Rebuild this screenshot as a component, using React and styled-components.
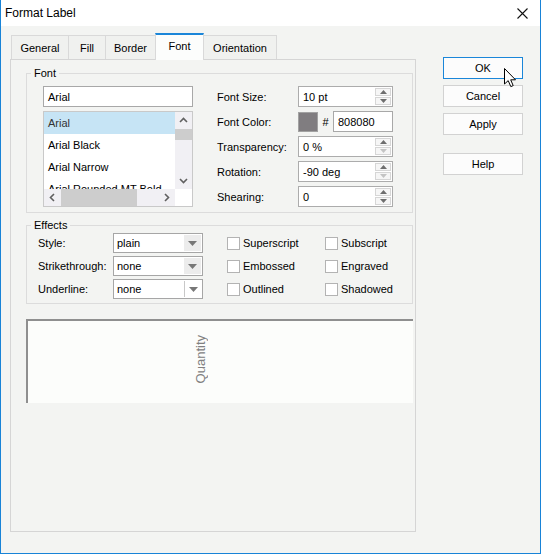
import React from 'react';
import styled, { createGlobalStyle } from 'styled-components';

const GlobalStyle = createGlobalStyle`
  html, body { margin: 0; padding: 0; background: #fff; }
  body {
    font-family: "Liberation Sans", Arial, sans-serif;
    font-size: 11px;
    color: #000;
  }
  * { box-sizing: border-box; }
`;

const Window = styled.div`
  position: relative;
  width: 541px;
  height: 554px;
  background: #f3f4f2;
  border: 1px solid #1883d7;
  border-top: none;
  display: flex;
  flex-direction: column;
`;

const TitleBar = styled.div`
  height: 26px;
  background: #fff;
  display: flex;
  align-items: center;
  justify-content: space-between;
  padding: 0 12px 0 4px;
  font-size: 12px;
`;

const Body = styled.div`
  display: flex;
  gap: 27px;
  padding: 9px 0 0 9px;
`;

const TabArea = styled.div`
  width: 406px;
  display: flex;
  flex-direction: column;
`;

const TabRow = styled.div`
  display: flex;
  align-items: flex-end;
  height: 24px;
  padding-left: 1px;
`;

const Tab = styled.div`
  position: relative;
  width: ${p => p.w}px;
  height: ${p => (p.active ? 27 : 24)}px;
  margin-right: -1px;
  margin-bottom: ${p => (p.active ? -1 : 0)}px;
  z-index: ${p => (p.active ? 2 : 1)};
  border: 1px solid #d9d9d9;
  border-bottom: none;
  border-top: ${p => (p.active ? '2px solid #1a86d9' : '1px solid #d9d9d9')};
  background: ${p => (p.active ? '#fcfdfc' : '#f0f1ef')};
  display: flex;
  align-items: center;
  justify-content: center;
  padding-bottom: ${p => (p.active ? 3 : 0)}px;
`;

const Panel = styled.div`
  height: 473px;
  border: 1px solid #d5d5d5;
  padding: 6px 2px 0 15px;
  display: flex;
  flex-direction: column;
  align-items: flex-start;
`;

const Group = styled.fieldset`
  width: 387px;
  margin: ${p => p.mt || 0}px 0 0 0;
  padding: 0;
  border: 1px solid #dcdcdc;
  min-width: 0;
`;

const Legend = styled.legend`
  padding: 0 3px;
  margin-left: 4px;
  line-height: 14px;
`;

const GroupBody = styled.div`
  padding: ${p => p.pad};
`;

const FontRow = styled.div`
  display: flex;
  gap: 24px;
`;

const LeftCol = styled.div`
  width: 150px;
  display: flex;
  flex-direction: column;
  gap: 4px;
`;

const TextBox = styled.div`
  width: ${p => p.w || 150}px;
  height: ${p => p.h || 21}px;
  border: 1px solid #a8a8a8;
  background: #fff;
  display: flex;
  align-items: center;
  padding-left: 4px;
`;

const List = styled.div`
  width: 150px;
  height: 96px;
  border: 1px solid #c9c9c9;
  background: #fff;
  display: grid;
  grid-template-columns: 1fr 17px;
  grid-template-rows: 1fr 17px;
`;

const Items = styled.div`
  overflow: hidden;
`;

const Item = styled.div`
  height: 22px;
  line-height: 22px;
  padding-left: 4px;
  white-space: nowrap;
  background: ${p => (p.selected ? '#c6e4f5' : 'transparent')};
  color: ${p => (p.selected ? '#333' : '#000')};
`;

const VScroll = styled.div`
  background: #f1f0f4;
  display: flex;
  flex-direction: column;
`;

const HScroll = styled.div`
  background: #f1f0f4;
  display: flex;
`;

const ScrollBtn = styled.div`
  width: 17px;
  height: 17px;
  flex: none;
  display: flex;
  align-items: center;
  justify-content: center;
`;

const Track = styled.div`
  flex: 1;
  display: flex;
  flex-direction: ${p => (p.vertical ? 'column' : 'row')};
`;

const Thumb = styled.div`
  background: #cdcdcd;
  width: ${p => (p.vertical ? '100%' : p.size + 'px')};
  height: ${p => (p.vertical ? p.size + 'px' : '100%')};
`;

const Corner = styled.div`
  background: #fff;
`;

const PropGrid = styled.div`
  display: grid;
  grid-template-columns: 81px 95px;
  grid-auto-rows: 21px;
  row-gap: 4px;
  align-items: center;
`;

const Spin = styled.div`
  width: 95px;
  height: 21px;
  border: 1px solid #acacac;
  background: #fff;
  display: flex;
  align-items: center;
`;

const SpinText = styled.span`
  flex: 1;
  padding-left: 4px;
`;

const SpinButtons = styled.div`
  width: 17px;
  height: 100%;
  display: flex;
  flex-direction: column;
  padding: 1px 1px 1px 0;
  gap: 1px;
`;

const SpinBtn = styled.div`
  flex: 1;
  border: 1px solid #d6d6d6;
  background: #f6f6f6;
  display: flex;
  align-items: center;
  justify-content: center;
`;

const ColorRow = styled.div`
  display: flex;
  align-items: center;
  height: 21px;
`;

const Swatch = styled.div`
  width: 20px;
  height: 20px;
  border: 1px solid #a2a2a2;
  background: #807d80;
`;

const Hash = styled.span`
  width: 15px;
  text-align: center;
`;

const EffectsGrid = styled.div`
  display: grid;
  grid-template-columns: 75px 114px 98px 1fr;
  grid-auto-rows: 20px;
  row-gap: 3px;
  align-items: center;
`;

const Combo = styled.div`
  width: 90px;
  height: 20px;
  border: 1px solid #a6a6a6;
  background: #fff;
  display: flex;
  align-items: center;
  padding: 1px;
`;

const ComboText = styled.span`
  flex: 1;
  padding-left: 2px;
`;

const ComboArrow = styled.div`
  width: 17px;
  height: 100%;
  display: flex;
  align-items: center;
  justify-content: center;
  background: ${p => (p.hot ? '#fff' : '#ececec')};
  border-left: ${p => (p.hot ? '1px solid #c8c8c8' : 'none')};
`;

const Check = styled.label`
  display: flex;
  align-items: center;
  gap: 3px;
`;

const Box = styled.span`
  width: 13px;
  height: 13px;
  border: 1px solid #b3b3b3;
  background: #fff;
`;

const Preview = styled.div`
  width: 387px;
  height: 84px;
  margin-top: 15px;
  background: #fcfdfb;
  box-shadow: inset 2px 2px 0 #8f8f8f;
  display: flex;
  align-items: center;
  padding: 2px 0 5px 167px;
`;

const Rotated = styled.span`
  writing-mode: vertical-rl;
  transform: rotate(180deg);
  font-size: 13px;
  color: #808080;
`;

const ButtonCol = styled.div`
  margin-top: 22px;
  display: flex;
  flex-direction: column;
  gap: 6px;
`;

const Button = styled.div`
  width: 80px;
  height: 22px;
  margin-top: ${p => p.mt || 0}px;
  border: 1px solid ${p => (p.primary ? '#1a86d9' : '#d2d2d2')};
  background: #fcfcfc;
  display: flex;
  align-items: center;
  justify-content: center;
`;

const Cursor = styled.svg`
  position: absolute;
  left: 503px;
  top: 68px;
`;

const Tri = ({ down, dim }) => (
  <svg width="7" height="4" viewBox="0 0 7 4">
    <polygon
      points={down ? '0,0 7,0 3.5,4' : '0,4 7,4 3.5,0'}
      fill={dim ? '#c4c4c4' : '#6e6e6e'}
    />
  </svg>
);

const rot = { up: 0, right: 90, down: 180, left: 270 };
const Chevron = ({ dir }) => (
  <svg width="9" height="9" viewBox="0 0 9 9" style={{ transform: `rotate(${rot[dir]}deg)` }}>
    <polyline points="1,6 4.5,2.5 8,6" fill="none" stroke="#606060" strokeWidth="1.6" />
  </svg>
);

const Spinner = ({ value, dimDown }) => (
  <Spin>
    <SpinText>{value}</SpinText>
    <SpinButtons>
      <SpinBtn><Tri /></SpinBtn>
      <SpinBtn><Tri down dim={dimDown} /></SpinBtn>
    </SpinButtons>
  </Spin>
);

const ComboBox = ({ value, hot }) => (
  <Combo>
    <ComboText>{value}</ComboText>
    <ComboArrow hot={hot}>
      <svg width="9" height="5" viewBox="0 0 9 5">
        <polygon points="0,0 9,0 4.5,5" fill="#777" />
      </svg>
    </ComboArrow>
  </Combo>
);

const CheckItem = ({ label }) => (
  <Check>
    <Box />
    {label}
  </Check>
);

const tabs = [
  { name: 'General', w: 58 },
  { name: 'Fill', w: 38 },
  { name: 'Border', w: 51 },
  { name: 'Font', w: 49, active: true },
  { name: 'Orientation', w: 74 },
];

const fonts = ['Arial', 'Arial Black', 'Arial Narrow', 'Arial Rounded MT Bold'];

export default function App() {
  return (
    <>
      <GlobalStyle />
      <Window>
        <TitleBar>
          <span>Format Label</span>
          <svg width="11" height="11" viewBox="0 0 11 11">
            <path d="M0.5 0.5 L10.5 10.5 M10.5 0.5 L0.5 10.5" stroke="#111" strokeWidth="1.1" />
          </svg>
        </TitleBar>
        <Body>
          <TabArea>
            <TabRow>
              {tabs.map(t => (
                <Tab key={t.name} w={t.w} active={t.active}>{t.name}</Tab>
              ))}
            </TabRow>
            <Panel>
              <Group>
                <Legend>Font</Legend>
                <GroupBody pad="6px 17px 5px 16px">
                  <FontRow>
                    <LeftCol>
                      <TextBox>Arial</TextBox>
                      <List>
                        <Items>
                          {fonts.map((f, i) => (
                            <Item key={f} selected={i === 0}>{f}</Item>
                          ))}
                        </Items>
                        <VScroll>
                          <ScrollBtn><Chevron dir="up" /></ScrollBtn>
                          <Track vertical>
                            <Thumb vertical size={11} />
                          </Track>
                          <ScrollBtn><Chevron dir="down" /></ScrollBtn>
                        </VScroll>
                        <HScroll>
                          <ScrollBtn><Chevron dir="left" /></ScrollBtn>
                          <Track>
                            <Thumb size={76} />
                          </Track>
                          <ScrollBtn><Chevron dir="right" /></ScrollBtn>
                        </HScroll>
                        <Corner />
                      </List>
                    </LeftCol>
                    <PropGrid>
                      <span>Font Size:</span>
                      <Spinner value="10 pt" />
                      <span>Font Color:</span>
                      <ColorRow>
                        <Swatch />
                        <Hash>#</Hash>
                        <TextBox w={60} h={21}>808080</TextBox>
                      </ColorRow>
                      <span>Transparency:</span>
                      <Spinner value="0 %" dimDown />
                      <span>Rotation:</span>
                      <Spinner value="-90 deg" dimDown />
                      <span>Shearing:</span>
                      <Spinner value="0" />
                    </PropGrid>
                  </FontRow>
                </GroupBody>
              </Group>
              <Group mt={5}>
                <Legend>Effects</Legend>
                <GroupBody pad="1px 0 4px 11px">
                  <EffectsGrid>
                    <span>Style:</span>
                    <ComboBox value="plain" />
                    <CheckItem label="Superscript" />
                    <CheckItem label="Subscript" />
                    <span>Strikethrough:</span>
                    <ComboBox value="none" />
                    <CheckItem label="Embossed" />
                    <CheckItem label="Engraved" />
                    <span>Underline:</span>
                    <ComboBox value="none" hot />
                    <CheckItem label="Outlined" />
                    <CheckItem label="Shadowed" />
                  </EffectsGrid>
                </GroupBody>
              </Group>
              <Preview>
                <Rotated>Quantity</Rotated>
              </Preview>
            </Panel>
          </TabArea>
          <ButtonCol>
            <Button primary>OK</Button>
            <Button>Cancel</Button>
            <Button>Apply</Button>
            <Button mt={12}>Help</Button>
          </ButtonCol>
        </Body>
        <Cursor width="13" height="20" viewBox="0 0 13 20">
          <path d="M0.5 0.5 L0.5 16 L4.2 12.6 L6.8 18.6 L9.2 17.6 L6.7 11.8 L11.5 11.8 Z" fill="#fff" stroke="#000" strokeWidth="1" />
        </Cursor>
      </Window>
    </>
  );
}
